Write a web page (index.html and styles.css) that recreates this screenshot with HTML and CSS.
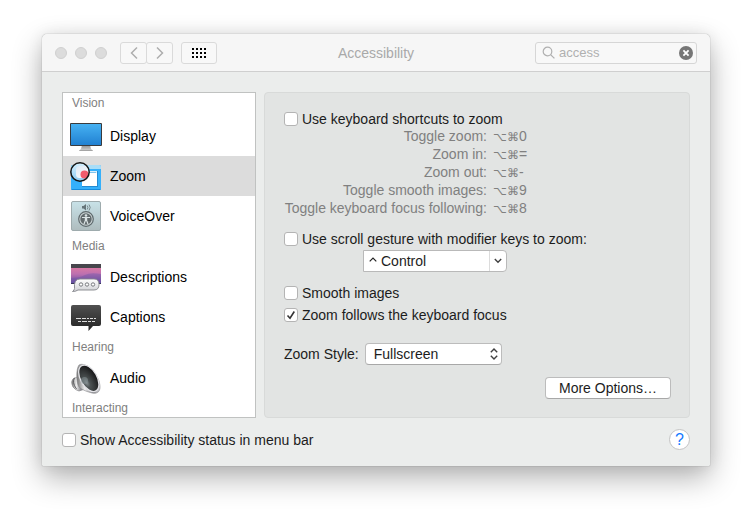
FILE: index.html
```html
<!DOCTYPE html>
<html lang="en">
<head>
<meta charset="utf-8">
<title>Accessibility</title>
<link rel="stylesheet" href="styles.css">
</head>
<body>
<main class="window">
  <header class="titlebar">
    <div class="lights"><span class="light"></span><span class="light"></span><span class="light"></span></div>
    <div class="nav">
      <button class="tool" type="button" aria-label="Back"><svg width="8" height="14" viewBox="0 0 8 14"><path d="M7 1.500 1.500 7 7 12.500" fill="none" stroke="#adadad" stroke-width="1.500"/></svg></button>
      <button class="tool" type="button" aria-label="Forward"><svg width="8" height="14" viewBox="0 0 8 14"><path d="M1 1.500 6.500 7 1 12.500" fill="none" stroke="#adadad" stroke-width="1.500"/></svg></button>
    </div>
    <button class="tool tool-grid" type="button" aria-label="Show All"><svg width="14" height="10" viewBox="0 0 14 10"><path d="M0 1h2m2 0h2m2 0h2m2 0h2M0 5h2m2 0h2m2 0h2m2 0h2M0 9h2m2 0h2m2 0h2m2 0h2" stroke="#000" stroke-width="2"/></svg></button>
    <h1 class="title">Accessibility</h1>
    <div class="search">
      <svg width="13" height="13" viewBox="0 0 13 13"><circle cx="5.500" cy="5.500" r="4.300" fill="none" stroke="#b0b0b0" stroke-width="1.200"/><path d="m8.600 8.600 3.800 3.800" stroke="#b0b0b0" stroke-width="1.300"/></svg>
      <input class="search-input" type="text" value="access" aria-label="Search">
      <button class="clear" type="button" aria-label="Clear"><svg width="14" height="14" viewBox="0 0 14 14"><circle cx="7" cy="7" r="7" fill="#767676"/><path d="m4.400 4.400 5.200 5.200m0-5.200-5.200 5.200" stroke="#fff" stroke-width="1.800"/></svg></button>
    </div>
  </header>

  <div class="content">
    <nav class="sidebar" aria-label="Categories">
      <h2 class="group group-first">Vision</h2>
      <a class="item" href="#display">
        <svg width="32" height="32" viewBox="0 0 32 32"><defs><linearGradient id="scr" x2="0" y2="1"><stop stop-color="#46b1f2"/><stop offset="1" stop-color="#2181d2"/></linearGradient><linearGradient id="std" x2="0" y2="1"><stop stop-color="#8e8e8e"/><stop offset="1" stop-color="#d6d6d6"/></linearGradient></defs><path d="M12 25h8l1 4 2 1.500v.5H9v-.5l2-1.500z" fill="url(#std)"/><path d="M9.500 30.500h13" stroke="#a5a5a5"/><rect y="3" width="32" height="23" rx="1" fill="#393b3e"/><rect x="1" y="4" width="30" height="21" fill="url(#scr)"/></svg>
        Display</a>
      <a class="item item-on" href="#zoom" aria-current="page">
        <svg width="32" height="32" viewBox="0 0 32 32"><defs><linearGradient id="lens" x2="0" y2="1"><stop stop-color="#d5effc"/><stop offset="1" stop-color="#8fcdf5"/></linearGradient><linearGradient id="pane" x2="1" y2="1"><stop stop-color="#dfe9f4"/><stop offset="1" stop-color="#fff"/></linearGradient><clipPath id="glass"><circle cx="10" cy="12" r="9"/></clipPath></defs><rect x="1" y="5" width="30" height="25" rx="1.500" fill="#35b0fb"/><path d="M2.500 5H29.500q1.500 0 1.500 1.500V9H1V6.500z" fill="#a8ddf8"/><path d="M1.500 29.500h29" stroke="#178bdc"/><rect x="12" y="11" width="16" height="16" fill="#238bd3"/><rect x="12" y="11" width="15" height="15" fill="#fff"/><path d="M12 12h15" stroke="#d9effb" stroke-width="2"/><path d="M19 12.500h7" stroke="#7fc4ee"/><g clip-path="url(#glass)"><circle cx="10" cy="12" r="9" fill="url(#lens)"/><rect x="6" y="6" width="18" height="12" rx="3.500" fill="url(#pane)"/><circle cx="14.500" cy="14.500" r="4" fill="#f05c6d"/></g><circle cx="10" cy="12" r="9.200" fill="none" stroke="#151515" stroke-width="1.500"/></svg>
        Zoom</a>
      <a class="item" href="#voiceover">
        <svg width="32" height="32" viewBox="0 0 32 32"><defs><linearGradient id="vo" x2="0" y2="1"><stop stop-color="#c8e2e8"/><stop offset="1" stop-color="#aebcbe"/></linearGradient></defs><rect x="1.500" y="1.500" width="29" height="29" rx="1.500" fill="url(#vo)" stroke="#9eabad"/><path d="M12 6h1.500L16 4v6.500l-2.500-2H12z" fill="#667579"/><path d="M17.200 5.500q1.500 2 0 4M19 4.500q2.400 3 0 6" fill="none" stroke="#667579" stroke-width=".8"/><circle cx="16" cy="19" r="7.300" fill="#cbd4d5" stroke="#5e696c" stroke-width="1.200"/><circle cx="16" cy="19" r="5.700" fill="#626b6d"/><circle cx="16" cy="15.500" r="1.300" fill="#dbe4e5"/><path d="M12 17.500h8M15.400 17.500v3L14 24m2.600-6.500v3L18 24M16 17v4" fill="none" stroke="#dbe4e5" stroke-width="1.200"/></svg>
        VoiceOver</a>
      <h2 class="group">Media</h2>
      <a class="item" href="#descriptions">
        <svg width="32" height="32" viewBox="0 0 32 32"><defs><linearGradient id="sky" x2="0" y2="1"><stop stop-color="#ea7f9d"/><stop offset=".5" stop-color="#bd70b0"/><stop offset="1" stop-color="#5a4b9c"/></linearGradient><linearGradient id="bub" x2="0" y2="1"><stop stop-color="#fff"/><stop offset="1" stop-color="#cfd0d4"/></linearGradient></defs><rect x="1" y="3" width="30" height="20" fill="url(#sky)"/><path d="M1 17q9 0 14-3t16-1v10H1z" fill="#6654a8" opacity=".4"/><rect x="1" y="3" width="30" height="4" fill="#47464c"/><path d="M1 22.500h30" stroke="#39365b"/><path d="M10 18h14q5 0 5 5.500T24 29H8q-2 1.500-5.500 1.500 2-1.500 2-3Q3.500 18 10 18z" fill="url(#bub)" stroke="#85868b" stroke-width=".9"/><g fill="#fff" stroke="#77797e"><circle cx="11" cy="23.500" r="1.700"/><circle cx="17" cy="23.500" r="1.700"/><circle cx="23" cy="23.500" r="1.700"/></g></svg>
        Descriptions</a>
      <a class="item" href="#captions">
        <svg width="32" height="32" viewBox="0 0 32 32"><defs><linearGradient id="cap" x2="0" y2="1"><stop stop-color="#505050"/><stop offset="1" stop-color="#232323"/></linearGradient></defs><path d="M3 4h26q2 0 2 2v17q0 2-2 2h-6l-4.500 5v-5H3q-2 0-2-2V6q0-2 2-2z" fill="url(#cap)"/><path d="M6 17.500h20" stroke="#dedede" stroke-dasharray="5 1 4 1 2 1 3 1"/><path d="M8 20.500h17" stroke="#dedede" stroke-dasharray="3 1 5 1 3 1"/></svg>
        Captions</a>
      <h2 class="group">Hearing</h2>
      <a class="item" href="#audio">
        <svg width="32" height="32" viewBox="0 0 32 32"><defs><linearGradient id="met"><stop stop-color="#737373"/><stop offset=".35" stop-color="#ededed"/><stop offset=".7" stop-color="#85858a"/><stop offset="1" stop-color="#d6d6da"/></linearGradient><radialGradient id="cone" cx=".25" cy=".6" r=".7"><stop stop-color="#899294"/><stop offset=".25" stop-color="#4c5253"/><stop offset="1" stop-color="#19191a"/></radialGradient></defs><path d="M10 15 4 16q-4 3-1 9 2 3 6 4l6-2z" fill="url(#met)" stroke="#77777a" stroke-width=".6"/><path d="M4.500 16q-3 4 2 11" fill="none" stroke="#606064"/><path d="M9 3c7-4 21 10 21 22 0 5-3 7-8 6-4-1-10-3-13-6-3-5-3-18 0-22z" fill="url(#met)" stroke="#88888b" stroke-width=".6"/><ellipse cx="18.800" cy="16.300" rx="8.200" ry="14.500" transform="rotate(-30 18.800 16.300)" fill="url(#cone)" stroke="#e4e4e8" stroke-width="1.300"/><circle cx="14.500" cy="18.500" r="3.500" fill="#849092" opacity=".6"/></svg>
        Audio</a>
      <h2 class="group group-last">Interacting</h2>
    </nav>

    <section class="panel" aria-label="Zoom">
      <label class="check"><input type="checkbox">Use keyboard shortcuts to zoom</label>
      <dl class="shortcuts">
        <dt>Toggle zoom:</dt><dd><span class="keys">⌥⌘</span>0</dd>
        <dt>Zoom in:</dt><dd><span class="keys">⌥⌘</span>=</dd>
        <dt>Zoom out:</dt><dd><span class="keys">⌥⌘</span>-</dd>
        <dt>Toggle smooth images:</dt><dd><span class="keys">⌥⌘</span>9</dd>
        <dt>Toggle keyboard focus following:</dt><dd><span class="keys">⌥⌘</span>8</dd>
      </dl>
      <label class="check check-scroll"><input type="checkbox">Use scroll gesture with modifier keys to zoom:</label>
      <div class="combo">
        <svg class="combo-key" width="8" height="5" viewBox="0 0 8 5"><path d="M.7 4.400 4 1l3.300 3.400" fill="none" stroke="#222" stroke-width="1.200"/></svg>
        <select class="combo-select" aria-label="Modifier key"><option>Control</option></select>
        <span class="combo-arrow"><svg width="8" height="6" viewBox="0 0 8 6"><path d="m.8 1 3.200 3.200L7.200 1" fill="none" stroke="#404040" stroke-width="1.400"/></svg></span>
      </div>
      <label class="check check-smooth"><input type="checkbox">Smooth images</label>
      <label class="check check-focus"><input type="checkbox" checked>Zoom follows the keyboard focus</label>
      <div class="style-row">
        <label for="style">Zoom Style:</label>
        <div class="popup">
          <select id="style" class="popup-select"><option>Fullscreen</option></select>
          <svg class="popup-arrows" width="8" height="12" viewBox="0 0 8 12"><path d="M.8 4.200 4 1l3.200 3.200M.8 7.800 4 11l3.200-3.200" fill="none" stroke="#404040" stroke-width="1.400"/></svg>
        </div>
      </div>
      <button class="more" type="button">More Options…</button>
    </section>
  </div>

  <footer class="footer">
    <label class="check"><input type="checkbox">Show Accessibility status in menu bar</label>
    <button class="help" type="button" aria-label="Help">?</button>
  </footer>
</main>
</body>
</html>
```
FILE: styles.css
```css
* { box-sizing: border-box; }

body {
  margin: 0;
  padding: 34px 42px 50px;
  background: #fff;
  color: #1c1c1c;
  font: 14px/18px "Liberation Sans", Arial, sans-serif;
}

button, input, select { margin: 0; font: inherit; color: inherit; }
svg { display: block; flex: none; }

.window {
  border-radius: 5px 5px 1px 1px;
  background: #ebedec;
  box-shadow: 0 0 1px rgba(0, 0, 0, .5), 0 12px 30px rgba(0, 0, 0, .3), 0 0 16px rgba(0, 0, 0, .08);
}

.titlebar {
  display: flex;
  align-items: center;
  height: 38px;
  padding: 0 13px;
  border-bottom: 1px solid #cfcfcf;
  border-radius: 5px 5px 0 0;
  background: #f6f6f6;
}

.lights { display: flex; gap: 8px; margin-right: 13px; }
.light { width: 12px; height: 12px; border: 1px solid #d0d0d0; border-radius: 50%; background: #dcdcdc; }

.nav { display: flex; margin-right: 8px; }
.tool {
  display: flex;
  align-items: center;
  justify-content: center;
  width: 27px;
  height: 22px;
  padding: 0;
  border: 1px solid #dadada;
  border-radius: 3px;
  background: #f8f8f8;
}
.nav .tool + .tool { margin-left: -1px; }
.tool-grid { width: 36px; }

.title { flex: 1; margin: 0; text-align: center; font-size: 14px; font-weight: 400; color: #a9a9a9; }

.search {
  display: flex;
  align-items: center;
  gap: 4px;
  width: 162px;
  height: 22px;
  padding: 0 3px 0 6px;
  border: 1px solid #d6d6d6;
  border-radius: 3px;
  background: #f8f8f8;
}
.search-input {
  flex: 1;
  min-width: 0;
  padding: 0;
  border: 0;
  outline: 0;
  background: none;
  font-size: 13px;
  color: #b0b0b0;
}
.clear { padding: 0; border: 0; background: none; }

.content {
  display: grid;
  grid-template-columns: 194px 1fr;
  gap: 8px;
  padding: 20px 20px 0;
}

.sidebar { border: 1px solid #c0c2c1; background: #fff; color: #000; }
.group { height: 21px; margin: 0; padding-left: 9px; font-size: 12px; line-height: 20px; font-weight: 400; color: #808080; }
.group-first { height: 23px; }
.group-last { height: 19px; }
.item {
  display: flex;
  align-items: center;
  gap: 8px;
  height: 40px;
  padding-left: 7px;
  color: inherit;
  text-decoration: none;
}
.item-on { background: #dcdcdc; }

.panel {
  display: flex;
  flex-direction: column;
  align-items: flex-start;
  padding: 17px 18px 18px 19px;
  border: 1px solid #d8dad9;
  border-radius: 4px;
  background: #e2e4e3;
}

.check { display: flex; align-items: center; gap: 4px; height: 18px; }
.check input {
  appearance: none;
  width: 14px;
  height: 14px;
  border: 1px solid #b4b4b4;
  border-radius: 3px;
  background: #fff;
}
.check input:checked {
  background: #fff url("data:image/svg+xml,%3Csvg xmlns='http://www.w3.org/2000/svg' viewBox='0 0 12 12'%3E%3Cpath d='M2.500 6.500 5 9.200 9.300 2.500' fill='none' stroke='%23333' stroke-width='1.600'/%3E%3C/svg%3E") center / 12px 12px no-repeat;
}
.check-scroll { margin-top: 13px; }
.check-smooth { margin-top: 12px; }
.check-focus { margin-top: 4px; }

.shortcuts {
  display: grid;
  grid-template-columns: 203px auto;
  column-gap: 6px;
  margin: -1px 0 0;
  color: #808080;
}
.shortcuts dt { text-align: right; white-space: nowrap; }
.shortcuts dd { height: 18px; margin: 0; }
.keys { font-size: 12px; }

.combo {
  display: flex;
  align-items: center;
  position: relative;
  width: 144px;
  height: 22px;
  margin: 2px 0 0 79px;
  border: 1px solid #b9b9b9;
  border-radius: 0 4px 4px 0;
  background: #fff;
}
.combo-key { position: absolute; left: 5px; top: 6px; pointer-events: none; }
.combo-select {
  appearance: none;
  width: 100%;
  height: 20px;
  padding: 0 18px 0 17px;
  border: 0;
  background: none;
}
.combo-arrow {
  position: absolute;
  right: 0;
  top: 0;
  display: flex;
  align-items: center;
  justify-content: center;
  width: 17px;
  height: 20px;
  border-left: 1px solid #dcdcdc;
  pointer-events: none;
}

.style-row { display: flex; align-items: center; gap: 6px; margin-top: 19px; }
.popup { position: relative; }
.popup-select {
  appearance: none;
  display: block;
  width: 137px;
  height: 22px;
  padding: 0 18px 0 8px;
  border: 1px solid #bcbcbc;
  border-bottom-color: #a8a8a8;
  border-radius: 4px;
  background: #fff;
}
.popup-arrows { position: absolute; right: 4px; top: 5px; pointer-events: none; }

.more {
  align-self: flex-end;
  width: 126px;
  height: 22px;
  margin-top: 12px;
  padding: 0;
  border: 1px solid #bcbcbc;
  border-bottom-color: #a8a8a8;
  border-radius: 4px;
  background: #fff;
}

.footer {
  display: flex;
  align-items: center;
  justify-content: space-between;
  padding: 11px 20px 16px;
}
.help {
  width: 21px;
  height: 21px;
  padding: 0;
  border: 1px solid #c4c4c4;
  border-radius: 50%;
  background: #fff;
  color: #147aff;
  font-size: 16px;
  line-height: 19px;
}
```
